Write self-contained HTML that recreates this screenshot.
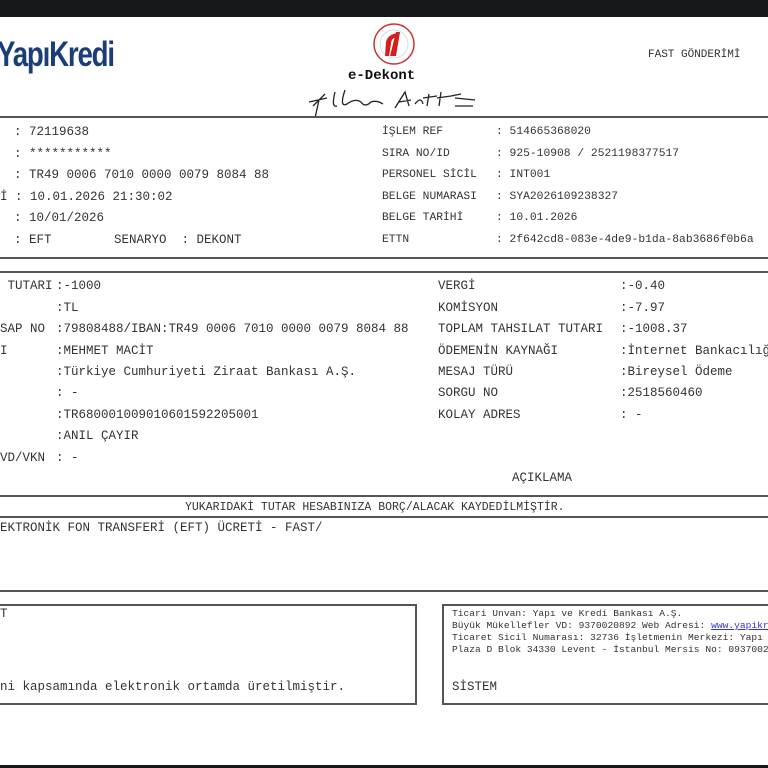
<!DOCTYPE html>
<html><head><meta charset="utf-8"><style>
*{margin:0;padding:0}
body{width:768px;height:768px;background:#fff;position:relative;overflow:hidden;font-family:"Liberation Mono",monospace;font-size:12.5px;color:#333}
.t{position:absolute;white-space:pre;line-height:14px}
.r{font-size:11.3px}
.hl{position:absolute;left:0;width:768px;height:2px;background:#555}
.box{position:absolute;border:2px solid #555;box-sizing:border-box}
</style></head><body>
<div style="position:absolute;left:0;top:0;width:768px;height:17px;background:#16181c"></div>
<div style="position:absolute;left:0;top:765px;width:768px;height:3px;background:#16181c"></div>
<div class="t" style="left:-3px;top:34px;font-family:'Liberation Sans',sans-serif;font-weight:bold;font-size:35px;line-height:42px;color:#1b3d7a;letter-spacing:-1.5px;transform:scaleX(0.79);transform-origin:left">YapıKredi</div>
<svg style="position:absolute;left:372px;top:22px" width="44" height="44"><circle cx="22" cy="22" r="20" fill="#fff" stroke="#c33" stroke-width="1.5"/><circle cx="22" cy="22" r="14" fill="#fff" stroke="#ddd"/><path d="M24 10 L28 10 L24 34 L18 34 Z" fill="#d21f1f"/><path d="M14 20 Q16 12 26 11 L25 15 Q19 16 19 22 L17 34 L13 34 Z" fill="#d21f1f"/></svg>
<div class="t" style="left:348px;top:69px;font-weight:bold;font-size:14px;color:#111">e-Dekont</div>
<svg style="position:absolute;left:305px;top:84px" width="175" height="36"><path d="M8 22 L20 10 M4 18 L22 14 M14 16 L10 34 M30 8 Q26 24 32 22 M40 6 Q34 24 42 20 Q50 14 56 18 Q60 24 66 18 Q72 16 78 20 M90 24 L100 8 L104 22 M94 18 L106 16 M110 20 Q116 12 118 20 M124 10 L122 22 M118 14 L132 12 M136 8 L134 22 M132 14 L146 12 L156 10 M150 14 L170 16 M150 22 L168 22" stroke="#222" stroke-width="1.3" fill="none"/></svg>
<div class="t" style="left:648px;top:48px;font-size:11px">FAST GÖNDERİMİ</div>
<div class="hl" style="top:116px"></div>
<div class="t" style="left:14px;top:125px">: 72119638</div>
<div class="t" style="left:14px;top:147px">: ***********</div>
<div class="t" style="left:14px;top:168px">: TR49 0006 7010 0000 0079 8084 88</div>
<div class="t" style="left:0px;top:190px">İ : 10.01.2026 21:30:02</div>
<div class="t" style="left:14px;top:211px">: 10/01/2026</div>
<div class="t" style="left:14px;top:233px">: EFT</div>
<div class="t" style="left:114px;top:233px">SENARYO  : DEKONT</div>
<div class="t r" style="left:382px;top:125px">İŞLEM REF</div><div class="t r" style="left:496px;top:125px">: 514665368020</div>
<div class="t r" style="left:382px;top:147px">SIRA NO/ID</div><div class="t r" style="left:496px;top:147px">: 925-10908 / 2521198377517</div>
<div class="t r" style="left:382px;top:168px">PERSONEL SİCİL</div><div class="t r" style="left:496px;top:168px">: INT001</div>
<div class="t r" style="left:382px;top:190px">BELGE NUMARASI</div><div class="t r" style="left:496px;top:190px">: SYA2026109238327</div>
<div class="t r" style="left:382px;top:211px">BELGE TARİHİ</div><div class="t r" style="left:496px;top:211px">: 10.01.2026</div>
<div class="t r" style="left:382px;top:233px">ETTN</div><div class="t r" style="left:496px;top:233px">: 2f642cd8-083e-4de9-b1da-8ab3686f0b6a</div>
<div class="hl" style="top:257px"></div>
<div class="hl" style="top:271px"></div>
<div class="t" style="left:0;top:279px"> TUTARI</div><div class="t" style="left:56px;top:279px">:-1000</div>
<div class="t" style="left:56px;top:301px">:TL</div>
<div class="t" style="left:0;top:322px">SAP NO</div><div class="t" style="left:56px;top:322px">:79808488/IBAN:TR49 0006 7010 0000 0079 8084 88</div>
<div class="t" style="left:0;top:344px">I</div><div class="t" style="left:56px;top:344px">:MEHMET MACİT</div>
<div class="t" style="left:56px;top:365px">:Türkiye Cumhuriyeti Ziraat Bankası A.Ş.</div>
<div class="t" style="left:56px;top:386px">: -</div>
<div class="t" style="left:56px;top:408px">:TR680001009010601592205001</div>
<div class="t" style="left:56px;top:429px">:ANIL ÇAYIR</div>
<div class="t" style="left:0;top:451px">VD/VKN</div><div class="t" style="left:56px;top:451px">: -</div>
<div class="t" style="left:438px;top:279px">VERGİ</div><div class="t" style="left:620px;top:279px">:-0.40</div>
<div class="t" style="left:438px;top:301px">KOMİSYON</div><div class="t" style="left:620px;top:301px">:-7.97</div>
<div class="t" style="left:438px;top:322px">TOPLAM TAHSILAT TUTARI</div><div class="t" style="left:620px;top:322px">:-1008.37</div>
<div class="t" style="left:438px;top:344px">ÖDEMENİN KAYNAĞI</div><div class="t" style="left:620px;top:344px">:İnternet Bankacılığı</div>
<div class="t" style="left:438px;top:365px">MESAJ TÜRÜ</div><div class="t" style="left:620px;top:365px">:Bireysel Ödeme</div>
<div class="t" style="left:438px;top:386px">SORGU NO</div><div class="t" style="left:620px;top:386px">:2518560460</div>
<div class="t" style="left:438px;top:408px">KOLAY ADRES</div><div class="t" style="left:620px;top:408px">: -</div>
<div class="t" style="left:512px;top:471px">AÇIKLAMA</div>
<div class="hl" style="top:495px"></div>
<div class="t" style="left:185px;top:501px;font-size:11.5px">YUKARIDAKİ TUTAR HESABINIZA BORÇ/ALACAK KAYDEDİLMİŞTİR.</div>
<div class="hl" style="top:516px"></div>
<div class="t" style="left:0;top:521px">EKTRONİK FON TRANSFERİ (EFT) ÜCRETİ - FAST/</div>
<div class="hl" style="top:590px"></div>
<div class="box" style="left:-5px;top:604px;width:422px;height:101px"></div>
<div class="t" style="left:0;top:607px">T</div>
<div class="t" style="left:0;top:680px">ni kapsamında elektronik ortamda üretilmiştir.</div>
<div class="box" style="left:442px;top:604px;width:332px;height:101px"></div>
<div style="position:absolute;left:444px;top:606px;width:324px;height:97px;overflow:hidden">
<div class="t" style="left:8px;top:2px;font-size:9.6px;line-height:12px">Ticari Unvan: Yapı ve Kredi Bankası A.Ş.
Büyük Mükellefler VD: 9370020892 Web Adresi: <span style="color:#33c;text-decoration:underline">www.yapikredi.com.tr</span>
Ticaret Sicil Numarası: 32736 İşletmenin Merkezi: Yapı Kredi
Plaza D Blok 34330 Levent - İstanbul Mersis No: 0937002089200741</div>
<div class="t" style="left:8px;top:74px">SİSTEM</div>
</div>
</body></html>
